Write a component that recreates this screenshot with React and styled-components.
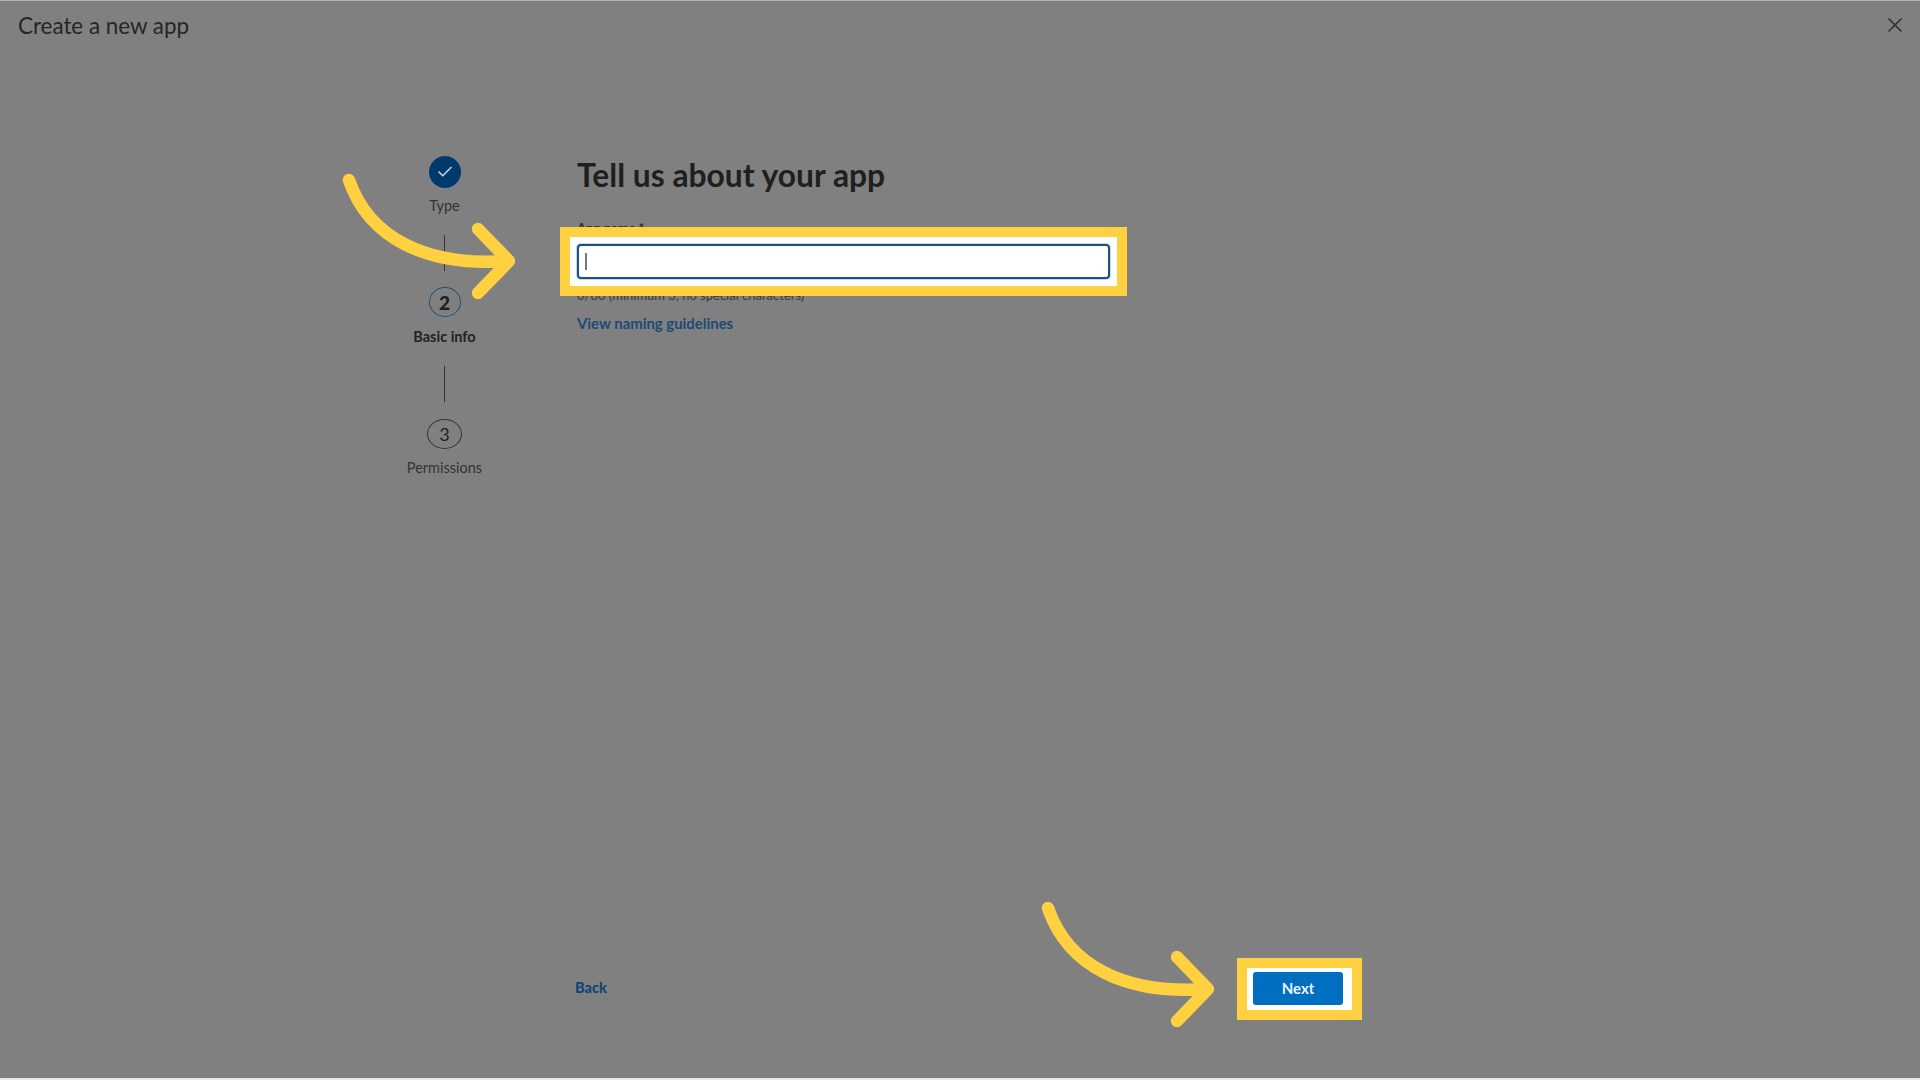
import React from "react";
import styled, { createGlobalStyle } from "styled-components";
import { X, Check } from "lucide-react";

const GlobalStyle = createGlobalStyle`
  html, body {
    margin: 0;
    padding: 0;
    background: #808080;
  }
  * {
    box-sizing: border-box;
  }
`;

function Arrow({ left }) {
  return (
    <ArrowSvg $left={left} viewBox="0 0 182 132" width="182" height="132">
      <path d="M9 9C29 68 88 96 168 90" />
      <path d="M138 58L169 90L138 122" />
    </ArrowSvg>
  );
}

function Step({ label, active, done, number, width, height, color }) {
  return (
    <StepItem>
      <CircleSlot>
        <Circle $w={width} $h={height} $color={color} $done={done} $active={active}>
          {done ? <Check size={18} strokeWidth={2.2} color="#c3cfdb" /> : number}
        </Circle>
      </CircleSlot>
      <StepLabel $active={active}>{label}</StepLabel>
    </StepItem>
  );
}

export default function App() {
  return (
    <Page>
      <GlobalStyle />
      <Header>
        <Title>Create a new app</Title>
        <CloseButton>
          <X size={24} strokeWidth={1.7} />
        </CloseButton>
      </Header>
      <Body>
        <Stepper>
          <Step label="Type" done width={32} height={32} />
          <Connector />
          <Step label="Basic info" number="2" active width={32} height={30} color="#1e4f7e" />
          <Connector />
          <Step label="Permissions" number="3" width={35} height={30} color="#333" />
        </Stepper>
        <Form>
          <Heading>Tell us about your app</Heading>
          <FieldLabel>App name *</FieldLabel>
          <InputWrap>
            <InputHighlight />
            <Arrow left={-237} />
            <NameInput readOnly />
            <Caret />
          </InputWrap>
          <Helper>0/80 (minimum 3, no special characters)</Helper>
          <GuideLink>View naming guidelines</GuideLink>
        </Form>
      </Body>
      <Footer>
        <BackLink>Back</BackLink>
        <NextWrap>
          <NextHighlight />
          <Arrow left={-214} />
          <NextButton>Next</NextButton>
        </NextWrap>
      </Footer>
    </Page>
  );
}

const Page = styled.div`
  display: flex;
  flex-direction: column;
  width: 1920px;
  height: 1080px;
  overflow: hidden;
  background: #808080;
  border-top: 1px solid #b5b5b5;
  border-bottom: 2px solid #e6e6e6;
  font-family: Lato, "Open Sans", sans-serif;
  color: #1f1f1f;
`;

const Header = styled.div`
  display: flex;
  align-items: center;
  justify-content: space-between;
  height: 48px;
  padding: 0 13px 0 18px;
`;

const Title = styled.div`
  font-size: 22.4px;
  font-weight: 400;
  color: #262626;
`;

const CloseButton = styled.div`
  display: flex;
  color: #333;
`;

const Body = styled.div`
  display: flex;
  gap: 88px;
  padding: 107px 0 0 400px;
`;

const Stepper = styled.div`
  display: flex;
  flex-direction: column;
  align-items: center;
  width: 89px;
`;

const StepItem = styled.div`
  display: flex;
  flex-direction: column;
  align-items: center;
  gap: 8px;
`;

const CircleSlot = styled.div`
  display: flex;
  align-items: center;
  height: 32px;
`;

const Circle = styled.div`
  display: flex;
  align-items: center;
  justify-content: center;
  align-self: ${(p) => (p.$active ? "flex-start" : "center")};
  width: ${(p) => p.$w}px;
  height: ${(p) => p.$h}px;
  border-radius: 50%;
  border: ${(p) => (p.$done ? "none" : `1.5px solid ${p.$color}`)};
  background: ${(p) => (p.$done ? "#003a6c" : "transparent")};
  font-size: ${(p) => (p.$active ? 19 : 18)}px;
  font-weight: ${(p) => (p.$active ? 900 : 400)};
  color: #1f1f1f;
`;

const StepLabel = styled.div`
  font-size: 14.5px;
  line-height: 20px;
  white-space: nowrap;
  font-weight: ${(p) => (p.$active ? 700 : 400)};
  color: ${(p) => (p.$active ? "#222" : "#333")};
`;

const Connector = styled.div`
  width: 1px;
  height: 36px;
  margin: 19px 0 16px;
  background: #333;
`;

const Form = styled.div`
  display: flex;
  flex-direction: column;
  width: 533px;
`;

const Heading = styled.h1`
  margin: -1px 0 0;
  font-size: 31.8px;
  line-height: 40px;
  font-weight: 700;
  white-space: nowrap;
  color: #1f1f1f;
`;

const FieldLabel = styled.div`
  margin: 24px 0 7px;
  font-size: 13px;
  line-height: 18px;
  font-weight: 700;
  color: #2a2a2a;
`;

const InputWrap = styled.div`
  position: relative;
  height: 35px;
`;

const InputHighlight = styled.div`
  position: absolute;
  inset: -17px;
  border: 10px solid #ffd040;
  background: #fff;
`;

const NameInput = styled.input`
  position: relative;
  display: block;
  width: 100%;
  height: 35px;
  border: 2px solid #1e4f7e;
  border-radius: 4px;
  background: #fff;
  box-shadow: 0 0 0 1px #c4d8ea;
  outline: none;
`;

const Caret = styled.div`
  position: absolute;
  left: 8px;
  top: 9px;
  width: 2px;
  height: 17px;
  background: #777;
`;

const ArrowSvg = styled.svg`
  position: absolute;
  left: ${(p) => p.$left}px;
  top: -73px;
  fill: none;
  stroke: #ffd040;
  stroke-width: 12.5;
  stroke-linecap: round;
  stroke-linejoin: round;
  overflow: visible;
`;

const Helper = styled.div`
  margin-top: 7px;
  font-size: 13px;
  line-height: 18px;
  color: #3a3a3a;
`;

const GuideLink = styled.div`
  margin-top: 9px;
  font-size: 14.9px;
  line-height: 20px;
  font-weight: 700;
  color: #1c4a75;
`;

const Footer = styled.div`
  display: flex;
  align-items: center;
  justify-content: space-between;
  width: 768px;
  margin: auto 0 0 575px;
  padding-bottom: 73px;
`;

const BackLink = styled.div`
  padding-bottom: 2px;
  font-size: 14.5px;
  font-weight: 900;
  color: #0f4675;
`;

const NextWrap = styled.div`
  position: relative;
  width: 90px;
  height: 33px;
`;

const NextHighlight = styled.div`
  position: absolute;
  inset: -14px -19px -15px -16px;
  border: 10px solid #ffd040;
  background: #fff;
`;

const NextButton = styled.div`
  position: relative;
  display: flex;
  align-items: center;
  justify-content: center;
  height: 33px;
  padding-bottom: 2px;
  border-radius: 3px;
  background: #006fc0;
  font-size: 15px;
  font-weight: 700;
  color: #eef4fa;
`;
